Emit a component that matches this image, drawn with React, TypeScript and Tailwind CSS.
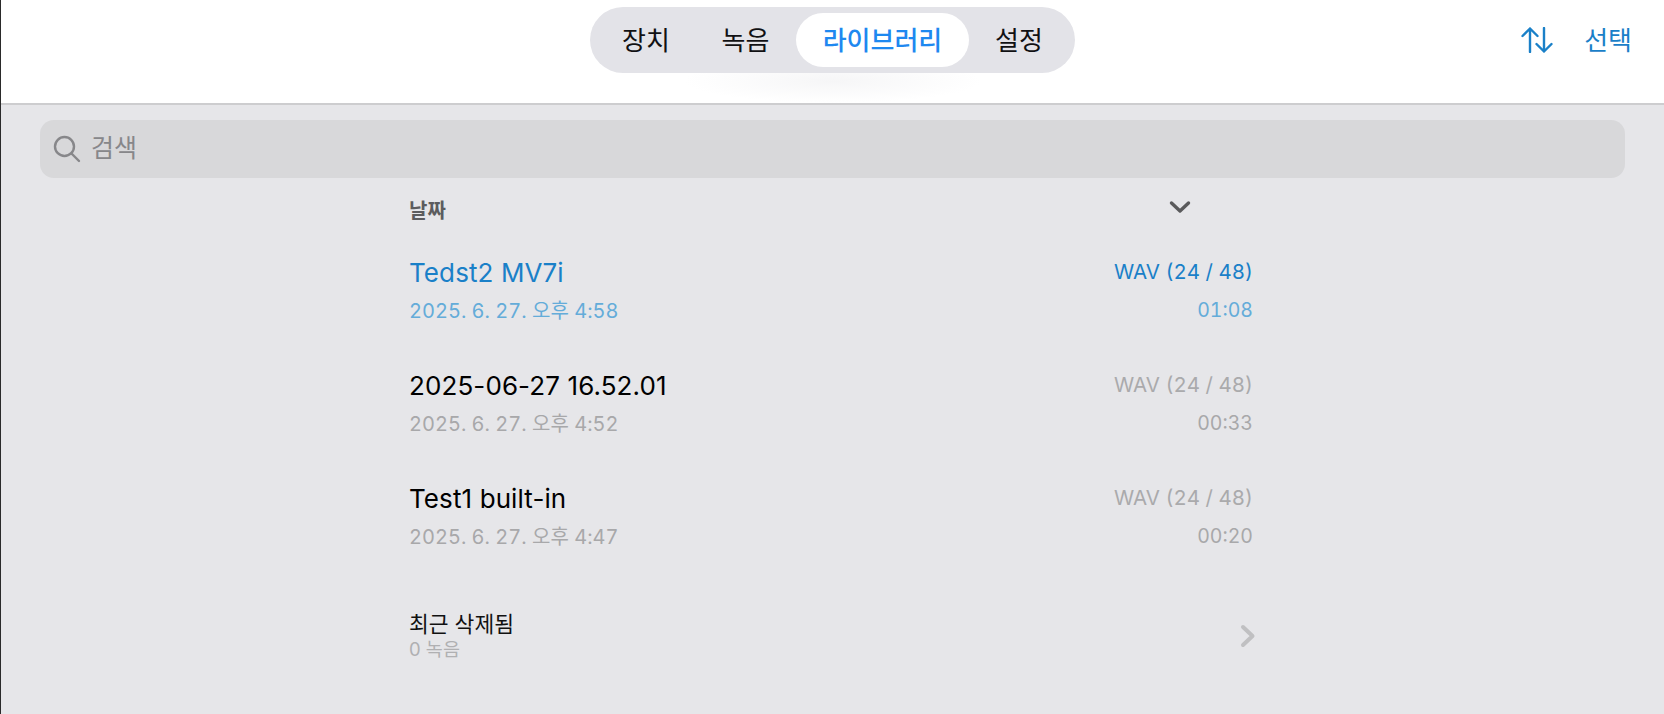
const tabs = ["장치", "녹음", "라이브러리", "설정"];

type Recording = {
  title: string;
  date: string;
  format: string;
  length: string;
  active?: boolean;
};

const recordings: Recording[] = [
  { title: "Tedst2 MV7i", date: "2025. 6. 27. 오후 4:58", format: "WAV (24 / 48)", length: "01:08", active: true },
  { title: "2025-06-27 16.52.01", date: "2025. 6. 27. 오후 4:52", format: "WAV (24 / 48)", length: "00:33" },
  { title: "Test1 built-in", date: "2025. 6. 27. 오후 4:47", format: "WAV (24 / 48)", length: "00:20" },
];

function Row({ item }: { item: Recording }) {
  return (
    <div className="h-[113px] pt-[14px]">
      <div className="flex h-[35px] items-center justify-between">
        <span className={`text-[26px] tracking-[0.1px] ${item.active ? "text-[#1a80c8]" : "text-black"}`}>{item.title}</span>
        <span className={`text-[20.5px] tabular-nums ${item.active ? "text-[#1a80c8]" : "text-[#aaaaac]"}`}>{item.format}</span>
      </div>
      <div className="mt-[3px] flex h-[36px] items-center justify-between tabular-nums">
        <span className={`text-[20px] ${item.active ? "text-[#64acd9]" : "text-[#a8a8aa]"}`}>{item.date}</span>
        <span className={`text-[19.5px] ${item.active ? "text-[#64acd9]" : "text-[#a8a8aa]"}`}>{item.length}</span>
      </div>
    </div>
  );
}

export default function App() {
  return (
    <div className="flex h-[714px] w-[1664px] flex-col overflow-hidden border-l border-[#2a2a2a] bg-[#e6e6e9] font-['Inter','Noto_Sans_CJK_KR',sans-serif]">
      {/* 상단 바 */}
      <header className="relative grid h-[105px] shrink-0 grid-cols-[1fr_485px_1fr] items-start border-b-2 border-[#cdcdcf] bg-white pt-[7px]">
        <div className="pointer-events-none absolute bottom-0 left-1/2 h-[44px] w-[300px] -translate-x-1/2 bg-[radial-gradient(ellipse_at_center,#f6f6f7_0%,#ffffff_70%)]" />
        <div />
        <nav className="relative flex h-[66px] items-center rounded-[33px] bg-[#e3e3e8] pl-[7px] pr-[6px]">
          <span className="w-[98px] text-center text-[26px] text-[#111113]">{tabs[0]}</span>
          <span className="w-[101px] text-center text-[26px] text-[#111113]">{tabs[1]}</span>
          <span className="flex h-[54px] w-[173px] items-center justify-center rounded-[27px] bg-white text-[26px] font-medium text-[#1e88f0]">{tabs[2]}</span>
          <span className="flex-1 text-center text-[26px] text-[#111113]">{tabs[3]}</span>
        </nav>
        <div className="flex h-[66px] items-center justify-end gap-[31px] pr-[32px] text-[#1a80c8]">
          <svg width="32" height="26" viewBox="0 0 32 26" fill="none" stroke="currentColor" strokeWidth="2.4" strokeLinecap="round" strokeLinejoin="round">
            <path d="M9 25V1.500M1.500 9l7.500-7.500 7.500 7.500" />
            <path d="M23 1v23.500M15.500 17l7.500 7.500 7.500-7.500" />
          </svg>
          <span className="text-[26px]">선택</span>
        </div>
      </header>

      {/* 검색 */}
      <div className="mx-[39px] mt-[15px] flex h-[58px] shrink-0 items-center rounded-[14px] bg-[#d8d8da] pl-[13px] text-[#87878a]">
        <svg width="28" height="28" viewBox="0 0 28 28" fill="none" stroke="currentColor" strokeWidth="2.4" strokeLinecap="round">
          <circle cx="11.5" cy="11.5" r="9.5" />
          <path d="M18.5 18.5l7.5 7.5" />
        </svg>
        <span className="ml-[10px] text-[25px]">검색</span>
      </div>

      {/* 목록 */}
      <main className="ml-[408px] w-[844px]">
        <div className="flex h-[63px] items-start justify-between pr-[62px]">
          <span className="mt-[20px] text-[20px] leading-[27px] font-semibold text-[#5c5c5e]">날짜</span>
          <svg width="22" height="14" viewBox="0 0 22 14" fill="none" stroke="#5a5a5c" strokeWidth="3.4" strokeLinecap="round" strokeLinejoin="round" className="mt-[22px]">
            <path d="M2.500 3l8.500 8 8.500-8" />
          </svg>
        </div>
        {recordings.map((item) => (
          <Row key={item.title} item={item} />
        ))}
        <div className="mt-[31px] flex items-center justify-between">
          <div>
            <div className="text-[21.500px] leading-[26px] text-[#111111]">최근 삭제됨</div>
            <div className="text-[18.500px] leading-[24px] text-[#b0b0b2]">0 녹음</div>
          </div>
          <svg width="16" height="24" viewBox="0 0 16 24" fill="none" stroke="#c0c0c2" strokeWidth="4" strokeLinecap="round" strokeLinejoin="round" className="mr-[-3px]">
            <path d="M3 3l9.500 9-9.500 9" />
          </svg>
        </div>
      </main>
    </div>
  );
}
